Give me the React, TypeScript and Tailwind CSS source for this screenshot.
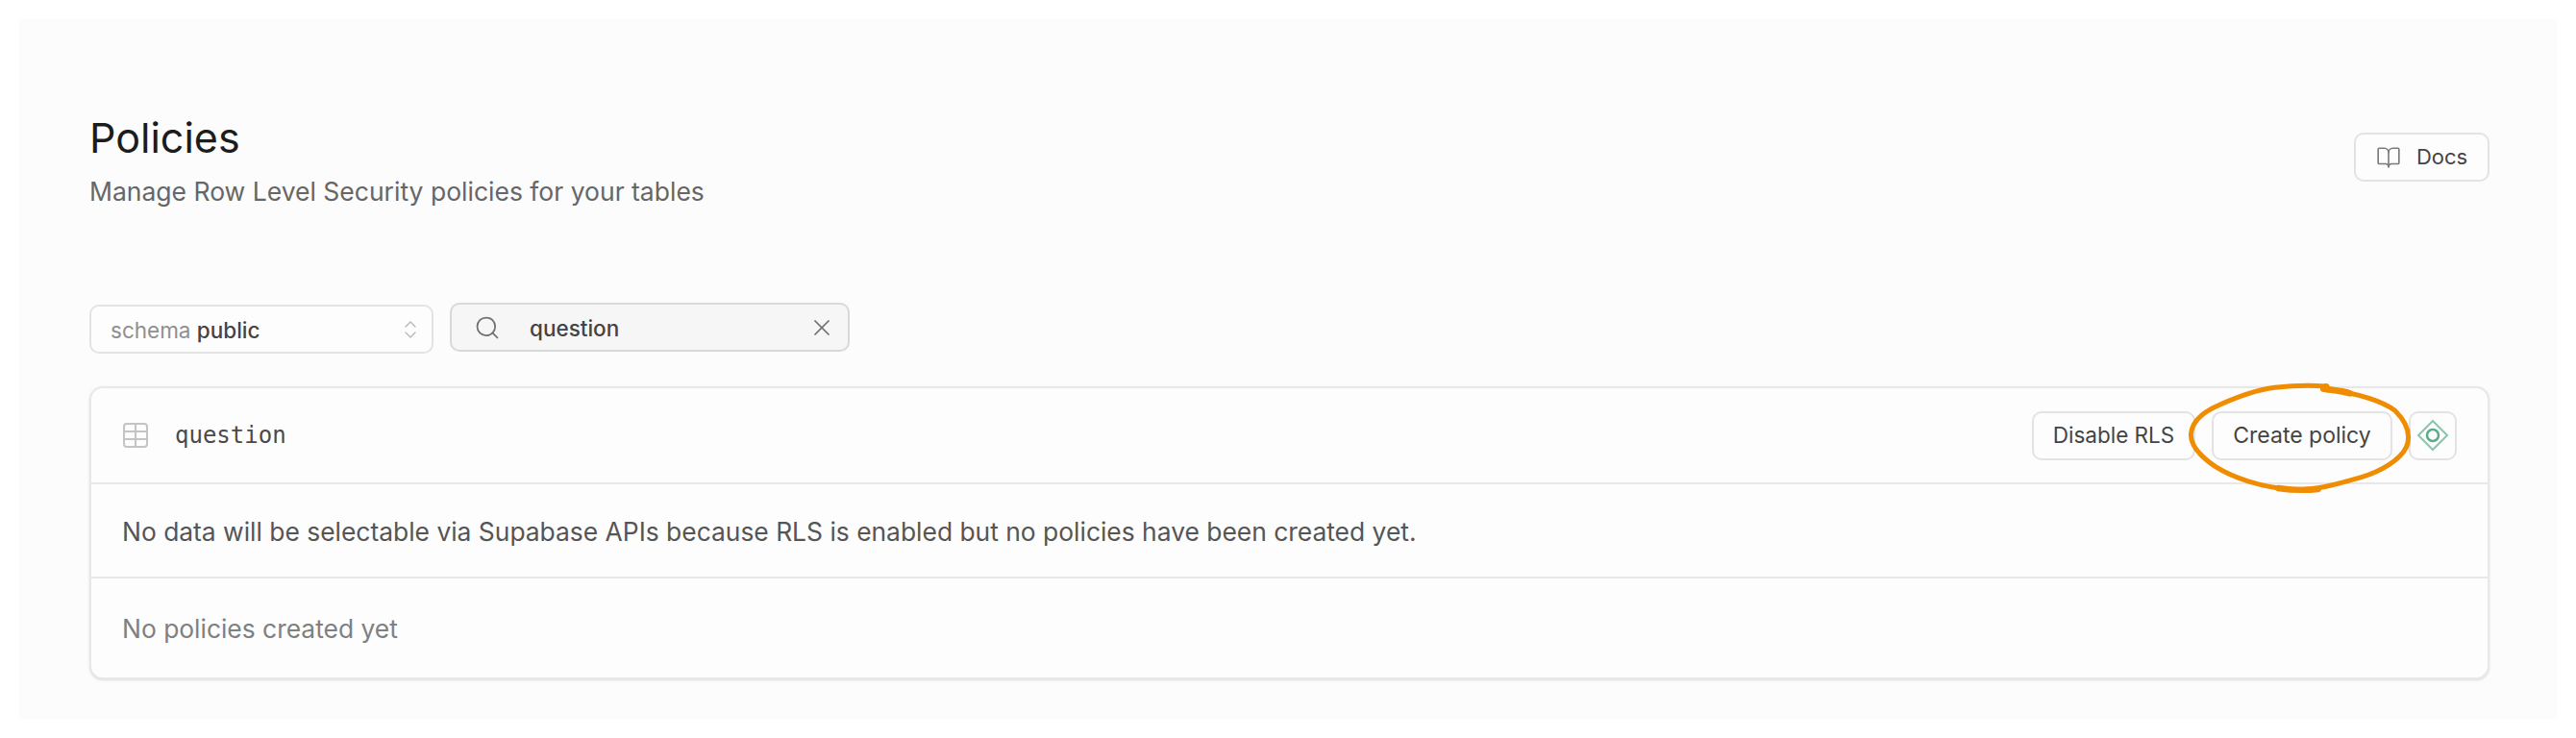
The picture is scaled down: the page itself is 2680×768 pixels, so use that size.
import React from "react";
import { BookOpen, ChevronsUpDown, Search, X } from "lucide-react";

const sans = "font-['Inter','Liberation_Sans',sans-serif]";

const OutlineButton = ({ children, className = "" }: { children: React.ReactNode; className?: string }) => (
  <button className={`flex h-[51px] items-center justify-center rounded-[10px] border-2 border-[#e3e3e3] bg-[#fdfdfd] text-[23px] text-[#444444] ${className}`}>
    {children}
  </button>
);

const TableIcon = () => (
  <svg width="28" height="28" viewBox="0 0 28 28" fill="none" stroke="#c4c4c4" strokeWidth="2">
    <rect x="2" y="2" width="24" height="24" rx="3" />
    <path d="M2 10h24M2 18h24M14 2v24" />
  </svg>
);

const DiamondIcon = () => (
  <svg width="34" height="34" viewBox="0 0 34 34" fill="none">
    <path d="M17 2 32 17 17 32 2 17Z" stroke="#8cc4ac" strokeWidth="2" />
    <circle cx="17" cy="17" r="6" stroke="#5dab8b" strokeWidth="2.5" />
  </svg>
);

// hand drawn marker ring round the create button
const MarkerRing = () => (
  <svg className="absolute left-[2175px] top-[-10px] pointer-events-none" width="250" height="125" viewBox="0 0 750 375" fill="none" stroke="#f08c00" strokeLinecap="round">
    <path
      strokeWidth="15"
      d="M450 24C400 20 340 22 290 28C225 36 160 62 100 90C60 110 30 140 28 175C28 210 60 245 105 275C160 310 250 340 340 346C420 350 490 328 560 308C620 290 680 255 700 215C715 180 705 140 665 100C620 65 540 45 440 30"
    />
    <path strokeWidth="19" d="M300 342C340 348 390 349 425 345" />
    <path strokeWidth="20" d="M442 32C470 36 500 38 525 46" />
    <circle cx="450" cy="26" r="11" fill="#f08c00" stroke="none" />
  </svg>
);

export default function App() {
  return (
    <div className={`h-[768px] bg-white p-5 ${sans}`}>
      <div className="h-[728px] bg-[#fcfcfc] pl-[73px] pr-[70px] pt-[98px]">
        <div className="flex items-start justify-between">
          <div>
            <h1 className="text-[43px] leading-[50px] font-normal text-[#1c1c1c]">Policies</h1>
            <p className="mt-[15px] text-[26.5px] leading-[32px] text-[#666666]">Manage Row Level Security policies for your tables</p>
          </div>
          <OutlineButton className="mt-[20px] w-[141px] gap-[16px] !text-[22px]">
            <BookOpen size={26} strokeWidth={1.5} className="text-[#7a7a7a]" />
            <span>Docs</span>
          </OutlineButton>
        </div>

        <div className="mt-[100px] flex items-start gap-[17px]">
          <div className="mt-[2px] flex h-[51px] w-[358px] items-center justify-between rounded-[10px] border-2 border-[#e3e3e3] bg-[#fdfdfd] pl-[20px] pr-[10px] text-[22.5px]">
            <span className="pt-[2px]">
              <span className="text-[#8f8f8f]">schema</span> <span className="font-medium text-[#444444]">public</span>
            </span>
            <ChevronsUpDown size={24} strokeWidth={1.25} className="text-[#b5b5b5]" />
          </div>
          <div className="flex h-[51px] w-[416px] items-center rounded-[10px] border-2 border-[#d8d8d8] bg-[#f6f6f6] pl-[23px] pr-[13px] text-[22.5px]">
            <Search size={28} strokeWidth={1.5} className="text-[#6f6f6f]" />
            <span className="ml-[30px] flex-1 pt-[2px] font-medium text-[#444444]">question</span>
            <X size={28} strokeWidth={1.5} className="text-[#6f6f6f]" />
          </div>
        </div>

        <div className="relative mt-[34px] h-[305px] rounded-[14px] border-2 border-[#e8e8e8] bg-[#fdfdfd] shadow-sm">
          <div className="flex h-[100px] items-center border-b-2 border-[#e8e8e8] pl-[32px] pr-[32px]">
            <TableIcon />
            <span className="ml-[27px] font-['DejaVu_Sans_Mono',monospace] text-[24px] text-[#4a4a4a]">question</span>
            <div className="ml-auto flex items-center gap-[17px]">
              <OutlineButton className="w-[170px] !text-[22.5px]">Disable RLS</OutlineButton>
              <OutlineButton className="w-[188px]">Create policy</OutlineButton>
              <OutlineButton className="w-[50px]">
                <DiamondIcon />
              </OutlineButton>
            </div>
          </div>
          <div className="flex h-[98px] items-center border-b-2 border-[#e8e8e8] pl-[32px] pt-[3px] text-[26.4px] text-[#555555]">
            No data will be selectable via Supabase APIs because RLS is enabled but no policies have been created yet.
          </div>
          <div className="flex h-[103px] items-center pl-[32px] pt-[2px] text-[26.4px] text-[#808080]">No policies created yet</div>
          <MarkerRing />
        </div>
      </div>
    </div>
  );
}
